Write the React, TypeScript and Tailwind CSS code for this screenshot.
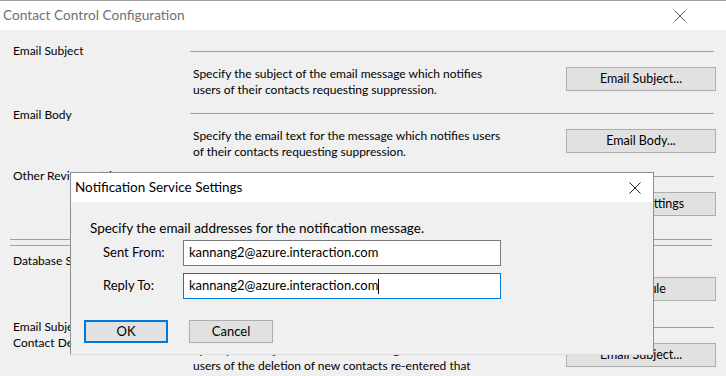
import type { ReactNode } from 'react';

const CloseIcon = ({ color }: { color: string }) => (
  <svg width="12" height="12" viewBox="0 0 12 12" className="shrink-0">
    <path d="M0.5 0.5 L11.5 11.5 M11.5 0.5 L0.5 11.5" stroke={color} strokeWidth="1" fill="none" />
  </svg>
);

type SectionProps = {
  label: ReactNode;
  desc: ReactNode;
  button: string;
  height: string;
  line?: boolean;
};

const Section = ({ label, desc, button, height, line = true }: SectionProps) => (
  <div className={`flex ${height}`}>
    <div className="w-[190px] shrink-0 pl-[13px] leading-[16px]">{label}</div>
    <div className="flex-1 pr-[12px]">
      <div className="h-[16px] flex items-center">
        {line && <div className="h-px w-full bg-[#a0a0a0]" />}
      </div>
      <div className="flex justify-between -mr-[2px]">
        <p className="mt-[7px] pl-[3px] leading-[15.5px]">{desc}</p>
        <button className="mt-[8px] w-[150px] h-[24px] shrink-0 bg-[#e1e1e1] border border-[#adadad] leading-none text-[12.5px]">
          {button}
        </button>
      </div>
    </div>
  </div>
);

const NotificationDialog = () => (
  <div className="absolute left-[70px] top-[172px] w-[584px] h-[183px] border border-[#8f8f8f] border-b-[#dcdcdc] bg-[#f0f0f0] text-[13px] text-black">
    <div className="h-[29px] bg-white flex items-center justify-between pl-[4px] pr-[12px]">
      <span className="text-[13.5px]">Notification Service Settings</span>
      <CloseIcon color="#222" />
    </div>
    <p className="ml-[19px] mt-[18px] leading-[16px] text-[13.5px]">Specify the email addresses for the notification message.</p>
    <div className="ml-[32px] mt-[4px] flex items-center">
      <span className="w-[80px]">Sent From:</span>
      <div className="w-[318px] h-[26px] bg-white border border-[#7a7a7a] flex items-center pl-[5px]">
        kannang2@azure.interaction.com
      </div>
    </div>
    <div className="ml-[32px] mt-[7px] flex items-center">
      <span className="w-[80px]">Reply To:</span>
      <div className="w-[318px] h-[26px] bg-white border border-[#0078d7] flex items-center pl-[5px]">
        kannang2@azure.interaction.com
        <span className="w-px h-[15px] bg-black" />
      </div>
    </div>
    <div className="ml-[13px] mt-[21px] flex gap-[21px]">
      <button className="w-[84px] h-[23px] bg-[#e1e1e1] border-2 border-[#0078d7] leading-none">OK</button>
      <button className="w-[84px] h-[23px] bg-[#e1e1e1] border border-[#adadad] leading-none">Cancel</button>
    </div>
  </div>
);

export default function App() {
  return (
    <div className="relative w-[726px] h-[376px] overflow-hidden bg-[#f0f0f0] font-[Lato,sans-serif] text-[12px] text-black">
      <div className="h-[30px] bg-white border-t border-[#a0a0a0] flex items-center justify-between pl-[3px] pr-[40px]">
        <span className="text-[13.7px] text-[#707070]">Contact Control Configuration</span>
        <CloseIcon color="#555" />
      </div>

      <div className="pt-[13px]">
        <Section
          height="h-[62px]"
          label="Email Subject"
          desc={<>Specify the subject of the email message which notifies<br />users of their contacts requesting suppression.</>}
          button="Email Subject..."
        />
        <Section
          height="h-[63px]"
          label={<span className="relative top-[2px]">Email Body</span>}
          desc={<>Specify the email text for the message which notifies users<br />of their contacts requesting suppression.</>}
          button="Email Body..."
        />
        <Section
          height="h-[71px]"
          label="Other Review Settings"
          desc={<>Specify the settings used when contacts requesting<br />suppression are reviewed.</>}
          button="Review Settings"
        />
        <div className="ml-[10px] mr-[14px]">
          <div className="h-px bg-[#a0a0a0]" />
          <div className="h-px bg-[#a0a0a0] mt-[5px]" />
        </div>
        <div className="mt-[7px]">
          <Section
            height="h-[66px]"
            line={false}
            label="Database Schedule"
            desc={<>Specify when the database of contacts is<br />checked for new entries.</>}
            button="Schedule"
          />
        </div>
        <Section
          height="h-[60px]"
          label={<>Email Subject for<br />Contact Deletion</>}
          desc={<>Specify the subject of the email message which notifies<br />users of the deletion of new contacts re-entered that<br />were previously deleted.</>}
          button="Email Subject..."
        />
      </div>

      <NotificationDialog />
    </div>
  );
}
